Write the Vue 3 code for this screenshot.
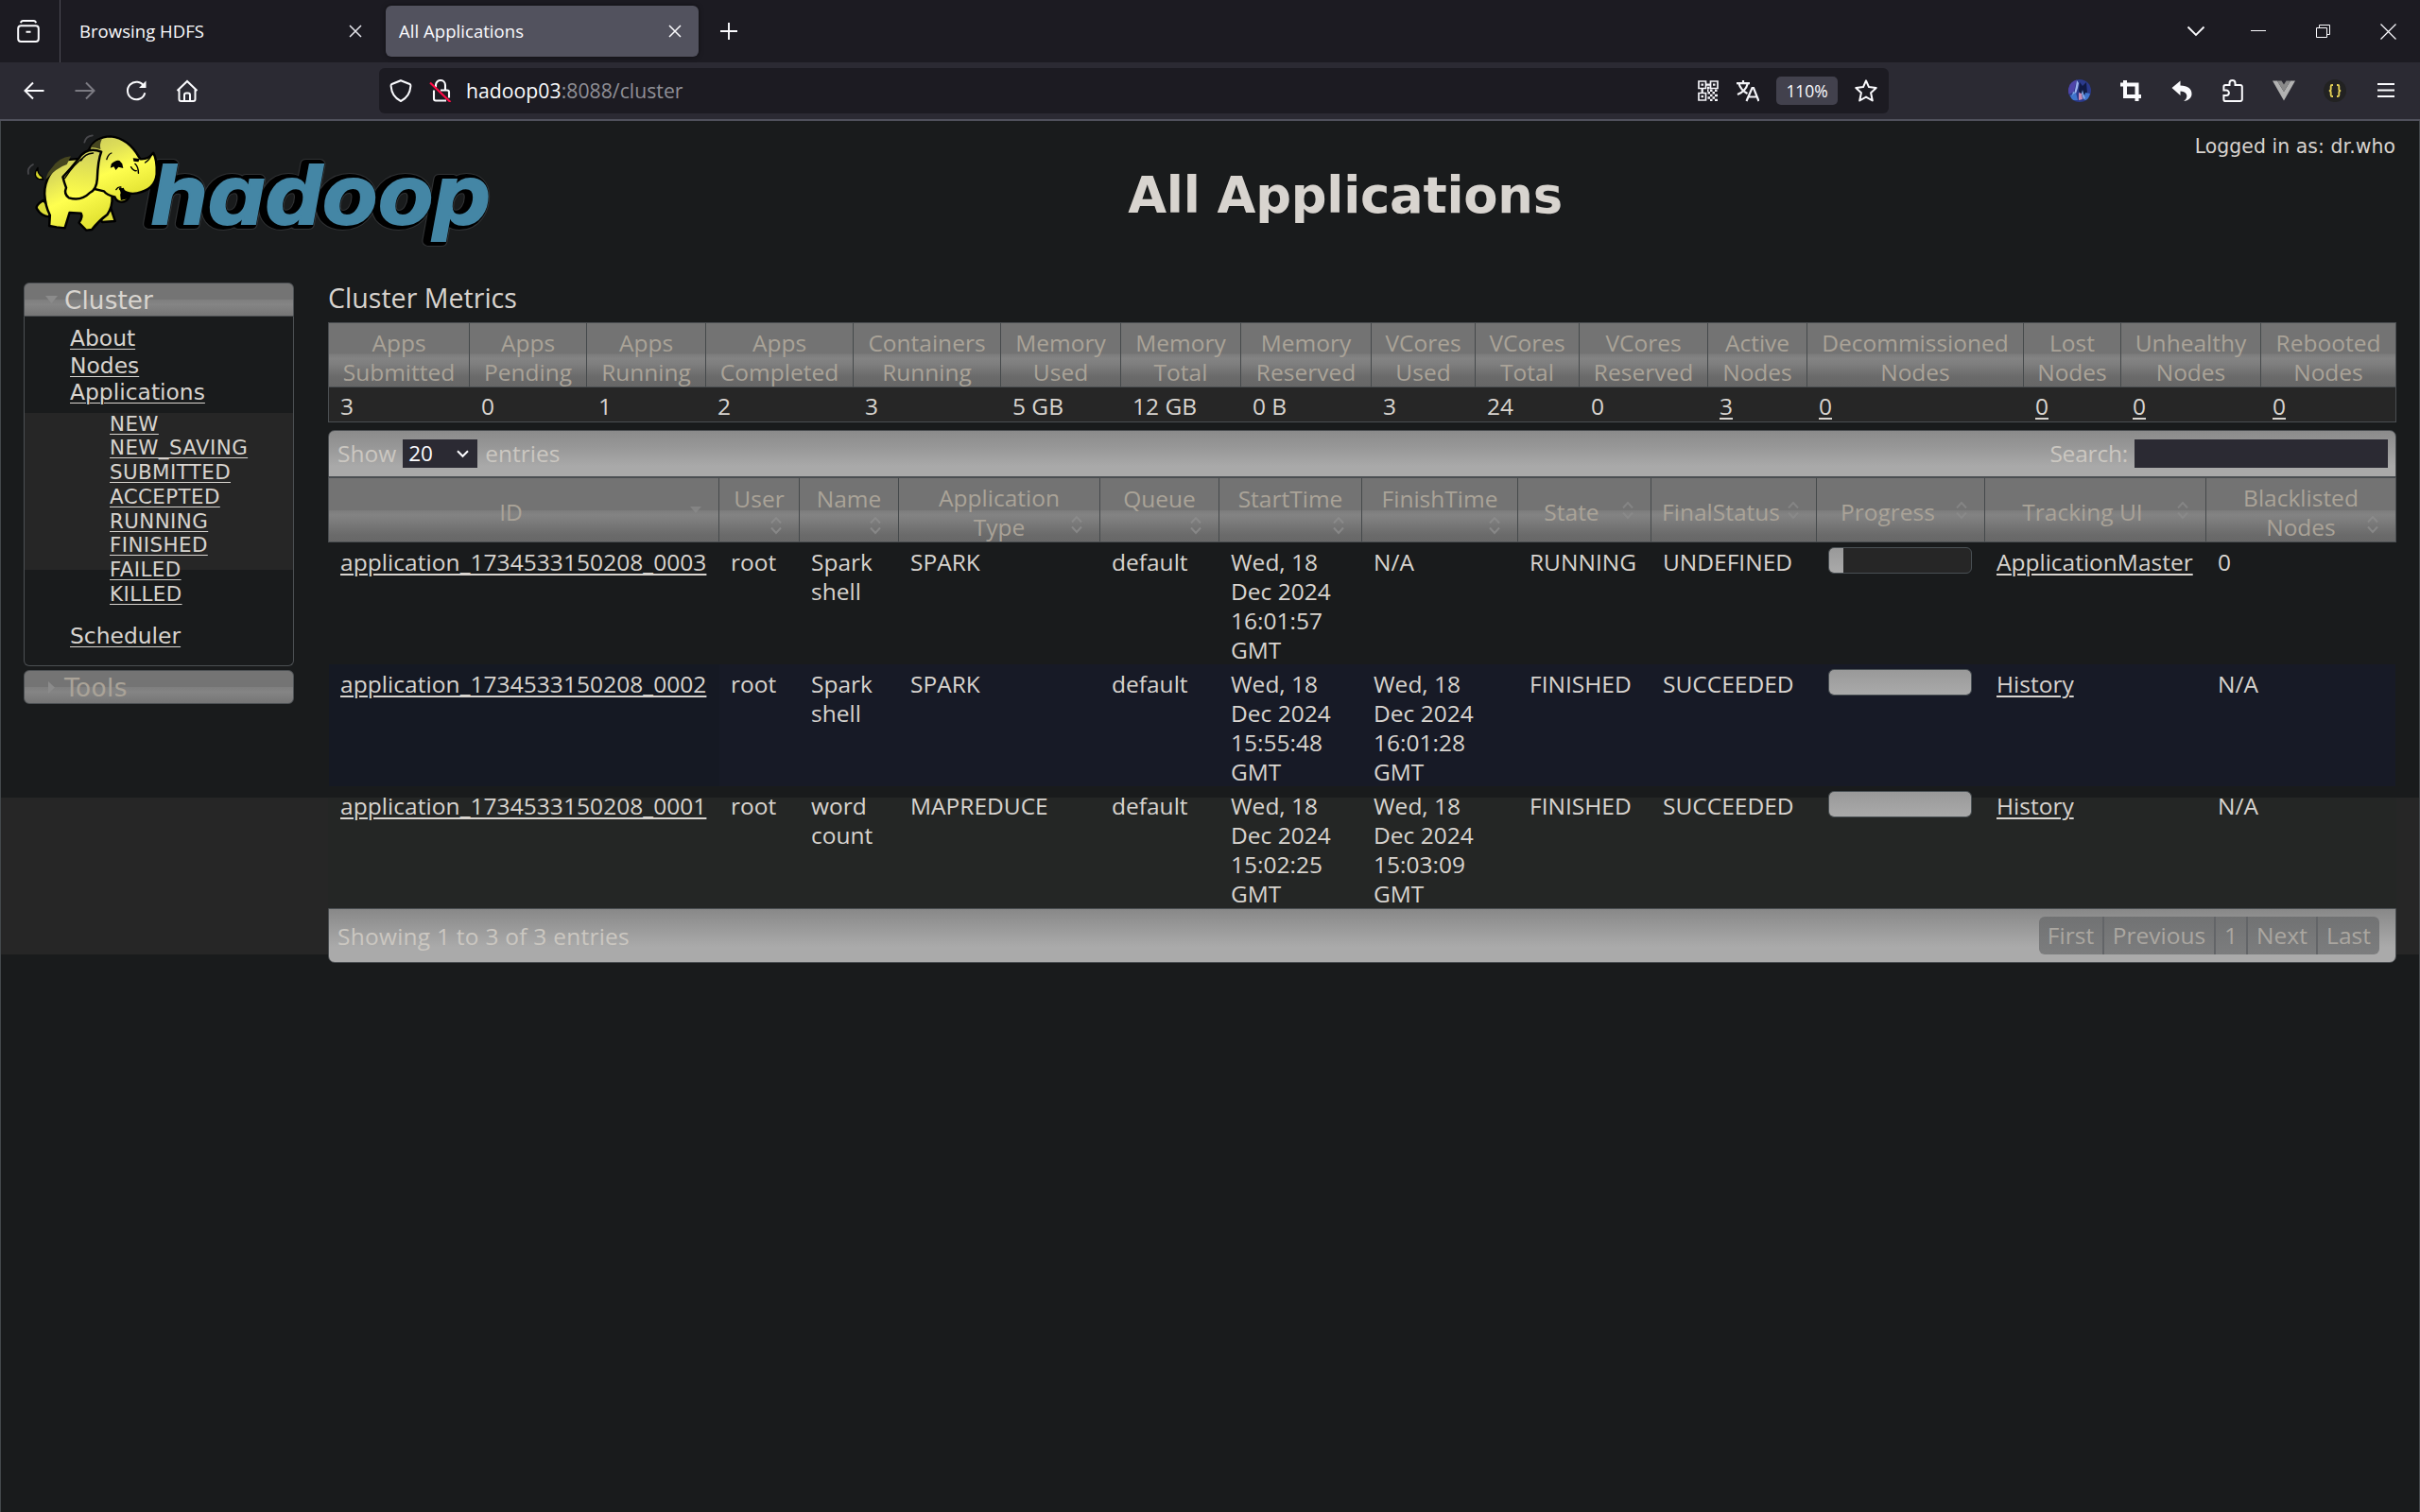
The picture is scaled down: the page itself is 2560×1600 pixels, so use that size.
<script setup>
const metrics = [
  ['Apps', 'Submitted', '3'],
  ['Apps', 'Pending', '0'],
  ['Apps', 'Running', '1'],
  ['Apps', 'Completed', '2'],
  ['Containers', 'Running', '3'],
  ['Memory', 'Used', '5 GB'],
  ['Memory', 'Total', '12 GB'],
  ['Memory', 'Reserved', '0 B'],
  ['VCores', 'Used', '3'],
  ['VCores', 'Total', '24'],
  ['VCores', 'Reserved', '0'],
  ['Active', 'Nodes', '3', true],
  ['Decommissioned', 'Nodes', '0', true],
  ['Lost', 'Nodes', '0', true],
  ['Unhealthy', 'Nodes', '0', true],
  ['Rebooted', 'Nodes', '0', true],
]

const columns = [
  { lines: ['ID'], kind: 'inline', sorted: true },
  { lines: ['User'], kind: 'wrapped' },
  { lines: ['Name'], kind: 'wrapped' },
  { lines: ['Application', 'Type'], kind: 'double' },
  { lines: ['Queue'], kind: 'wrapped' },
  { lines: ['StartTime'], kind: 'wrapped' },
  { lines: ['FinishTime'], kind: 'wrapped' },
  { lines: ['State'], kind: 'inline' },
  { lines: ['FinalStatus'], kind: 'inline' },
  { lines: ['Progress'], kind: 'inline' },
  { lines: ['Tracking UI'], kind: 'inline' },
  { lines: ['Blacklisted', 'Nodes'], kind: 'double' },
]

const rows = [
  {
    id: 'application_1734533150208_0003', user: 'root', name: ['Spark', 'shell'], type: 'SPARK', queue: 'default',
    start: ['Wed, 18', 'Dec 2024', '16:01:57', 'GMT'], finish: ['N/A'],
    state: 'RUNNING', final: 'UNDEFINED', progress: 10, ui: 'ApplicationMaster', black: '0',
  },
  {
    id: 'application_1734533150208_0002', user: 'root', name: ['Spark', 'shell'], type: 'SPARK', queue: 'default',
    start: ['Wed, 18', 'Dec 2024', '15:55:48', 'GMT'], finish: ['Wed, 18', 'Dec 2024', '16:01:28', 'GMT'],
    state: 'FINISHED', final: 'SUCCEEDED', progress: 100, ui: 'History', black: 'N/A',
  },
  {
    id: 'application_1734533150208_0001', user: 'root', name: ['word', 'count'], type: 'MAPREDUCE', queue: 'default',
    start: ['Wed, 18', 'Dec 2024', '15:02:25', 'GMT'], finish: ['Wed, 18', 'Dec 2024', '15:03:09', 'GMT'],
    state: 'FINISHED', final: 'SUCCEEDED', progress: 100, ui: 'History', black: 'N/A',
  },
]

const states = ['NEW', 'NEW_SAVING', 'SUBMITTED', 'ACCEPTED', 'RUNNING', 'FINISHED', 'FAILED', 'KILLED']
</script>

<template>
  <div class="window">
    <div class="tabs">
      <div class="view">
        <svg width="24" height="24" viewBox="0 0 24 24" fill="none" stroke="#fbfbfe" stroke-width="2">
          <rect x="1.2" y="6.2" width="21.6" height="16.8" rx="3" />
          <path d="M4 3.2C4.3 1.6 5 1 6.500 1h11C19 1 19.700 1.600 20 3.200M9.500 12.800h5" />
        </svg>
      </div>
      <div class="tab first">
        <span>Browsing HDFS</span>
        <svg width="14" height="14" viewBox="0 0 14 14" stroke="#e8e8ee" stroke-width="1.5"><path d="M1 1l12 12M13 1L1 13" /></svg>
      </div>
      <div class="tab active">
        <span>All Applications</span>
        <svg width="14" height="14" viewBox="0 0 14 14" stroke="#fbfbfe" stroke-width="1.5"><path d="M1 1l12 12M13 1L1 13" /></svg>
      </div>
      <svg class="plus" width="20" height="20" viewBox="0 0 20 20" stroke="#fbfbfe" stroke-width="1.9"><path d="M10 1v18M1 10h18" /></svg>
      <div class="controls">
        <svg width="20" height="20" viewBox="0 0 20 20" fill="none" stroke="#fbfbfe" stroke-width="1.8"><path d="M1.500 5.500L10 14l8.500-8.500" /></svg>
        <svg width="16" height="16" viewBox="0 0 16 16" stroke="#fbfbfe" stroke-width="1"><path d="M0 7.500h16" /></svg>
        <svg width="16" height="16" viewBox="0 0 16 16" fill="none" stroke="#fbfbfe" stroke-width="1"><path d="M.5 4.500h11v10H.500zM3.500 4.500v-3h11v10h-3" /></svg>
        <svg width="17" height="17" viewBox="0 0 17 17" stroke="#fbfbfe" stroke-width="1.2"><path d="M.5.500l16 16M16.500.500l-16 16" /></svg>
      </div>
    </div>

    <div class="toolbar">
      <div class="nav">
        <svg viewBox="0 0 24 24" fill="none" stroke="#fbfbfe" stroke-width="2"><path d="M22.500 12H3M11 3.500L2.500 12l8.500 8.500" /></svg>
        <svg viewBox="0 0 24 24" fill="none" stroke="#7b7a82" stroke-width="2"><path d="M1.500 12H21M13 3.500L21.500 12 13 20.500" /></svg>
        <svg viewBox="0 0 24 24" fill="none" stroke="#fbfbfe" stroke-width="2"><path d="M20.300 7.300A9.300 9.300 0 1 0 21.300 14.200" /><path d="M22.500 1.500v7.500h-7.500z" fill="#fbfbfe" stroke="none" /></svg>
        <svg viewBox="0 0 24 24" fill="none" stroke="#fbfbfe" stroke-width="2"><path d="M1.500 12L12 2l10.500 10M3.500 10.500V21a2 2 0 0 0 2 2h13a2 2 0 0 0 2-2V10.500M9 23v-6.500a2 2 0 0 1 2-2h2a2 2 0 0 1 2 2V23" /></svg>
      </div>
      <div class="urlbar">
        <svg class="shield" viewBox="0 0 24 24" fill="none" stroke="#fbfbfe" stroke-width="2"><path d="M12 1.200L21.500 5c1 .4 1 1 .9 2.200C21.900 13.500 18.500 20 12 23 5.500 20 2.100 13.500 1.600 7.200 1.500 6 1.500 5.400 2.500 5z" /></svg>
        <svg class="lock" viewBox="0 0 24 24" fill="none" stroke="#fbfbfe" stroke-width="2.100"><path d="M7 8.500V6a5 5 0 0 1 10 0v5M5 11.500v9a2 2 0 0 0 2 2h11M12 11.500h7a2 2 0 0 1 2 2v6" /><path d="M1 3.500L22.500 24" stroke="#ff0a45" stroke-width="2.200" /></svg>
        <span class="url"><b>hadoop03</b>:8088/cluster</span>
        <svg class="qr" viewBox="0 0 22 22" fill="none" stroke="#f4f4f8" stroke-width="1.700">
          <path d="M1 1h7.500v7.500H1zM13.500 1H21v7.500h-7.500zM1 13.500h7.500V21H1z" />
          <path d="M3.500 4.700h2.500M16 4.700h2.500M3.500 17.200h2.500M8.500 4.700h5M4.700 8.500v5" stroke-width="2.300" />
          <path d="M10 8h2.500M13 10.700h2.500M18 10.700h2.500M10.500 13.300H13M15.500 13.300H18M13 16h2.500M18 16h3M10.500 18.500H13M15.500 18.500H18M13 21h2.500M18 21h3M10 10.700h1.500" stroke-width="2.500" />
        </svg>
        <svg class="lang" viewBox="0 0 24 24" fill="none" stroke="#f4f4f8" stroke-width="2.200"><path d="M0 4.200h14M7 1v3.200M2.500 4.500C3.800 9 7 12.700 11.500 15M11.800 4.500C10.500 9.500 6.500 13.800 1 16M10.500 23l6-14h1.500l5.500 14M12.500 18.500h9" /></svg>
        <span class="pill">110%</span>
        <svg class="star" viewBox="0 0 24 24" fill="none" stroke="#fbfbfe" stroke-width="2" stroke-linejoin="round"><path d="M12 1.300l3 6.800 7.700.8-5.600 5.300 1.700 8.300L12 18.600 5.200 22.500l1.700-8.300L1.300 8.900 9 8.100z" /></svg>
      </div>
      <div class="ext">
        <svg viewBox="0 0 24 24"><defs><clipPath id="avatar"><circle cx="12" cy="12" r="12" /></clipPath></defs><g clip-path="url(#avatar)"><path fill="#2b3a8c" d="M0 0h24v24H0z" /><path fill="#4f44a8" d="M0 0h9l-3 13-6 3z" /><path fill="#101a45" d="M12 3l3 4 4-4 1 12-6 2-3-5z" /><path fill="#9fb4ee" d="M9 1l2 3-1 5-2 6-2 1 2-9z" /><path fill="#3f74cc" d="M2 17l6-3 2 8H4zM18 14l5 1-3 8-4-2z" /><path fill="#7fa8e8" d="M15 11l1 4 2 5-2 1-2-6zM5 13l2 1-3 3z" /><path fill="#c78bb4" d="M11 14l3 1 1 6-4 1z" /></g></svg>
        <svg viewBox="0 0 24 24" fill="none" stroke="#fbfbfe" stroke-width="4"><path d="M1 5.500h17.500V23M6 1v17h17" /></svg>
        <svg viewBox="0 0 24 24" fill="#fbfbfe"><path d="M1.500 9L10.500 1.500V6.500C18.500 6.500 22.500 10 22.500 15.500c0 4-3.500 7-8.500 7.500 4.500-2.500 5.500-10-3.500-10.500V17z" /></svg>
        <svg viewBox="0 0 24 24" fill="none" stroke="#fbfbfe" stroke-width="2"><path d="M8.500 6V4a3 3 0 0 1 6 0v2H20a1.800 1.800 0 0 1 1.800 1.800V21.200A1.800 1.800 0 0 1 20 23H4.200a1.800 1.800 0 0 1-1.800-1.800V17h2.800a2.700 2.700 0 0 0 0-5.400H2.400V7.800A1.800 1.800 0 0 1 4.200 6z" /></svg>
        <svg viewBox="0 0 24 24"><path fill="#b2b2b2" d="M0 1.500h5L12 13l7-11.500h5L12 22.500z" /><path fill="#8a8a8a" d="M5 1.500h4.500l2.500 4 2.500-4H19L12 13z" /></svg>
        <svg viewBox="0 0 24 24"><circle cx="12" cy="12" r="12" fill="#222222" /><path fill="none" stroke="#e2cf55" stroke-width="1.900" d="M10 6H8.800Q7.700 6 7.700 7.500v2.700Q7.700 12 5.800 12q1.900 0 1.900 1.800v2.700q0 1.500 1.100 1.500H10M14 6h1.200q1.100 0 1.100 1.500v2.700q0 1.800 1.900 1.800-1.900 0-1.900 1.800v2.700q0 1.500-1.100 1.500H14" /></svg>
        <svg viewBox="0 0 24 24" stroke="#fbfbfe" stroke-width="1.900"><path d="M3 5h18M3 11.500h18M3 18h18" /></svg>
      </div>
    </div>

    <main class="page">
      <header class="head">
        <svg class="logo" width="560" height="152" viewBox="0 24 1568 456" preserveAspectRatio="none">
          <defs>
            <linearGradient id="skin" x1="0" y1="0" x2=".45" y2="1">
              <stop offset="0" stop-color="#c9c95c" /><stop offset=".3" stop-color="#dede58" /><stop offset=".6" stop-color="#ffff4f" /><stop offset="1" stop-color="#e4e434" />
            </linearGradient>
            <linearGradient id="ear" x1=".6" y1="0" x2=".5" y2="1">
              <stop offset="0" stop-color="#d0d060" /><stop offset=".55" stop-color="#eaea50" /><stop offset="1" stop-color="#ffff4a" />
            </linearGradient>
          </defs>
          <g transform="scale(2.8 3)" font-family="Inter, 'Liberation Sans', sans-serif" font-weight="700" font-style="italic" font-size="87">
            <text x="160" y="116.500" textLength="359" lengthAdjust="spacingAndGlyphs" fill="#000" stroke="#303234" stroke-width="12" stroke-linejoin="round" transform="translate(-4 0)">hadoop</text>
            <text x="160" y="116.500" textLength="359" lengthAdjust="spacingAndGlyphs" fill="#000" stroke="#000" stroke-width="10" stroke-linejoin="round" transform="translate(-4 0)">hadoop</text>
            <text x="160" y="116.500" textLength="359" lengthAdjust="spacingAndGlyphs" fill="#4486a5" stroke="#4486a5" stroke-width="2">hadoop</text>
          </g>
          <g stroke="#000" stroke-width="7" stroke-linejoin="round" stroke-linecap="round">
            <path fill="#d9d92c" d="M112 172Q96 198 114 208l14 2-4-10q-14-8-12-28z" stroke-width="4" />
            <path fill="#dcdc38" d="M128 276q-26 18-18 28 12 22 36 24l6-24zM325 290l16 52-38 3-14-20z" />
            <path fill="url(#skin)" d="M192 148Q132 190 132 255q2 40 16 68l-2 34 22 4 24 3 14-49 34 2q6 12-6 30l22 24 16-2q20-28 46-48 16-24 14-60l-10-70-60-50z" />
            <path fill="url(#skin)" d="M262 118Q280 74 328 73q52 6 84 66l4 6q24 2 38-20 12 22 10 68-4 48-58 60-30 6-50-14l28 22q-8 22-26 20-14-2-18-16-24-6-32-18l-40-10-30-70z" />
            <path fill="#46461f" stroke="none" d="M150 178q24-40 60-42l-12 26q-30 10-62 48 2-18 14-32zM268 108q14-22 34-26-8 16-4 32-16-6-30-6z" />
            <path fill="url(#ear)" d="M300 122q-42-18-66 20-22 30-48 60 4 18 10 34-8 20 8 32 36 12 62-16 20-10 22-44 2-60 12-86z" />
            <path fill="none" d="M240 150q10-22 36-24M192 206q28-46 60-70" stroke-width="4" />
            <path fill="#000" stroke="none" d="M330 160q14-14 24-10l8 10 3 14-14-4-8 10-6-11-10 4zM394 142l20 2-4 10-14-2zM352 240l14-4q4 14 18 16l-2 18-24 6-2-18q4-8-4-18z" />
            <path fill="none" d="M316 146q4-16 14-20M388 170q8 14 16 12M400 160q10 10 10 30M430 156q14-10 18-24M344 242q6-10 14-8" stroke-width="4" />
            <path fill="none" stroke="#48484c" stroke-width="5" d="M250 92q4-20 24-22M84 192q-4-20 14-30" />
          </g>
        </svg>
        <h1>All Applications</h1>
        <div class="login">Logged in as: dr.who</div>
      </header>

      <div class="body">
        <aside class="side">
          <div class="bar open">
            <svg width="13" height="8" viewBox="0 0 13 8" fill="#8b8b8b"><path d="M0 0h13L6.500 8z" /></svg><span>Cluster</span>
          </div>
          <div class="menu">
            <ul>
              <li><a>About</a></li>
              <li><a>Nodes</a></li>
              <li><a>Applications</a>
                <ul class="sub">
                  <li v-for="s in states" :key="s"><a>{{ s }}</a></li>
                </ul>
              </li>
              <li><a>Scheduler</a></li>
            </ul>
          </div>
          <div class="bar closed">
            <svg width="13" height="13" viewBox="0 0 13 13" fill="#8b8b8b"><path d="M3 0v13L10 6.500z" /></svg><span>Tools</span>
          </div>
        </aside>

        <section class="content">
          <h2>Cluster Metrics</h2>
          <div class="metrics">
            <div v-for="(m, i) in metrics" :key="'h' + i" class="mh">{{ m[0] }}<br />{{ m[1] }}</div>
            <div v-for="(m, i) in metrics" :key="'v' + i" class="mv"><a v-if="m[3]">{{ m[2] }}</a><template v-else>{{ m[2] }}</template></div>
          </div>

          <div class="apps">
            <div class="tools">
              <span class="show">Show</span>
              <span class="select">20
                <svg width="13" height="9" viewBox="0 0 13 9" fill="none" stroke="#fbfbfe" stroke-width="2"><path d="M1 1.200l5.500 5.600L12 1.200" /></svg>
              </span>
              <span class="entries">entries</span>
              <span class="search">Search:</span>
              <span class="field"></span>
            </div>
            <div class="grid ghead">
              <div v-for="c in columns" :key="c.lines[0]" class="th" :class="c.kind">
                <span v-for="l in c.lines" :key="l">{{ l }}</span>
                <svg v-if="c.sorted" class="sort" width="14" height="24" viewBox="0 0 14 24"><path d="M1 8h12L7 15z" fill="#8e8e8e" /></svg>
                <svg v-else class="sort" width="14" height="24" viewBox="0 0 14 24" fill="none" stroke="#8e8e8e" stroke-width="2"><path d="M2 9.500l5-5.500 5 5.500M2 14.500L7 20l5-5.500" /></svg>
              </div>
            </div>
            <div v-for="(r, i) in rows" :key="r.id" class="grid row" :class="'r' + i">
              <div class="id"><a>{{ r.id }}</a></div>
              <div>{{ r.user }}</div>
              <div><p v-for="l in r.name" :key="l">{{ l }}</p></div>
              <div>{{ r.type }}</div>
              <div>{{ r.queue }}</div>
              <div><p v-for="l in r.start" :key="l">{{ l }}</p></div>
              <div><p v-for="l in r.finish" :key="l">{{ l }}</p></div>
              <div>{{ r.state }}</div>
              <div>{{ r.final }}</div>
              <div><div class="progress"><i :style="{ width: r.progress + '%' }"></i></div></div>
              <div><a>{{ r.ui }}</a></div>
              <div>{{ r.black }}</div>
            </div>
            <div class="foot">
              <span class="info">Showing 1 to 3 of 3 entries</span>
              <div class="pager"><span>First</span><span>Previous</span><span>1</span><span>Next</span><span>Last</span></div>
            </div>
          </div>
        </section>
      </div>
    </main>
  </div>
</template>

<style>
body { background: #191b1c; }
</style>

<style scoped>
* { box-sizing: border-box; }
svg { display: block; flex: none; }
.window { width: 2560px; height: 1600px; overflow: hidden; display: flex; flex-direction: column; font-family: "Open Sans", "Noto Sans", sans-serif; color: #d8d4cf; }

.tabs { height: 66px; flex: none; background: #1c1b22; display: flex; align-items: center; color: #fbfbfe; font-size: 18.500px; letter-spacing: .05px; }
.tab span { padding-bottom: 1px; }
.view { width: 64px; height: 66px; border-right: 1px solid #4d4c55; display: flex; align-items: center; padding-left: 18px; }
.tab { height: 54px; display: flex; align-items: center; justify-content: space-between; border-radius: 6px; white-space: nowrap; }
.first { width: 341px; padding: 0 22px 0 20px; }
.active { width: 331px; margin-left: 3px; padding: 0 18px 0 14px; background: #52525e; box-shadow: 0 0 5px rgba(0, 0, 0, .5); }
.plus { margin-left: 22px; }
.controls { margin-left: auto; margin-right: 25px; display: flex; align-items: center; }
.controls svg:nth-child(2) { margin-left: 48px; }
.controls svg:nth-child(3) { margin-left: 53px; }
.controls svg:nth-child(4) { margin-left: 52px; }

.toolbar { height: 62px; flex: none; background: #2b2a33; border-bottom: 2px solid #50515c; display: flex; align-items: center; }
.nav, .ext { display: flex; align-items: center; }
.nav { padding-left: 9px; }
.nav svg, .ext svg { width: 24px; height: 24px; margin: 0 15px; }
.ext { margin-left: auto; padding-right: 9px; }
.urlbar { width: 1597px; height: 48px; margin-left: 176px; background: #1c1b22; border-radius: 6px; display: flex; align-items: center; }
.shield { width: 24px; height: 24px; margin-left: 11px; }
.lock { width: 24px; height: 24px; margin-left: 18px; }
.url { margin-left: 15px; padding-bottom: 1px; font-size: 21.200px; letter-spacing: .03px; color: #8f8f96; }
.url b { font-weight: 400; color: #fbfbfe; }
.qr { width: 22px; height: 22px; margin-left: auto; }
.lang { width: 24px; height: 24px; margin-left: 19px; }
.pill { width: 65px; height: 30px; margin: 0 18px; border-radius: 5px; background: #42414d; color: #fbfbfe; font-size: 17.500px; line-height: 30px; text-align: center; letter-spacing: -.1px; }
.star { width: 24px; height: 24px; margin-right: 12px; }

.page { flex: 1; border: solid #43484b; border-width: 0 1px; background: linear-gradient(#191b1c 716px, #262626 716px, #262626 882px, #191b1c 882px); }
.head { height: 171px; margin-left: -1px; margin-right: -1px; display: grid; grid-template-columns: 560px 1726px 274px; font-family: "DejaVu Sans", Verdana, sans-serif; }
h1 { margin: 49px 0 0; font-size: 52.800px; line-height: 60px; font-weight: 700; text-align: center; letter-spacing: -.25px; }
.login { margin-top: 14px; padding-right: 26px; font-size: 20.400px; letter-spacing: .07px; line-height: 26px; text-align: right; white-space: nowrap; }

.body { display: flex; align-items: flex-start; }
a { text-decoration: underline; }
.side { width: 286px; margin-left: 24px; font-family: "DejaVu Sans", Verdana, sans-serif; }
.bar { height: 36px; border: 1px solid #4c5053; border-radius: 6px; background: linear-gradient(#747474 50%, #7e7e7e 50%, #858585 65%, #757575); display: flex; align-items: center; font-size: 26.300px; letter-spacing: .1px; }
.bar svg { margin-left: 22px; }
.bar span { margin-left: 7px; line-height: 33px; padding-top: 3px; }
.open { border-radius: 6px 6px 0 0; }
.closed { margin-top: 4px; height: 36px; color: #aaa398; }
.closed span { letter-spacing: .4px; padding-top: 2px; }
.menu { height: 370px; border: 1px solid #4c5053; border-top: 0; border-radius: 0 0 6px 6px; background: linear-gradient(transparent 102px, #262626 102px, #262626 268px, transparent 268px); }
ul { list-style: none; margin: 0; padding: 0; }
.menu > ul { padding: 9px 0 0 48px; font-size: 23.400px; line-height: 28.500px; }
.menu a { text-decoration-thickness: 1px; text-underline-offset: 3px; }
.sub { padding: 6px 0 17px 42px; font-size: 21.400px; line-height: 25.800px; letter-spacing: .4px; }

.content { width: 2188px; margin-left: 36px; font-size: 24.500px; line-height: 31px; }
h2 { margin: 0; height: 42px; font-size: 28.600px; line-height: 32px; font-weight: 400; white-space: nowrap; }
.content a { text-decoration-thickness: 2px; text-underline-offset: 3px; }
.metrics { border: 1px solid #4a4e51; display: grid; grid-template-columns: 149px 124px 126px 156px 156px 127px 127px 138px 110px 110px 136px 105px 229px 103px 148px 142px; }
.mh { height: 68px; padding-top: 5px; text-align: center; color: #aaa398; border-right: 1px solid #45494b; border-bottom: 1px solid #4a4e51; background: linear-gradient(#737373 48%, #7c7c7c 49%, #838383 56%, #7e7e7e 65%, #6a6a6a 85%, #676767); }
.mh:nth-child(16) { border-right: 0; }
.mv { height: 36px; padding: 4px 0 0 12px; background: #262626; }

.apps { margin-top: 8px; }
.tools { height: 50px; border: 1px solid #4a4e51; border-radius: 7px 7px 0 0; background: linear-gradient(#8b8b8b, #979797 35%, #a9a9a9 78%, #a9a9a9); display: flex; align-items: center; padding: 0 8px 0 9px; color: #cbc7c1; }
.show, .entries, .search { padding-bottom: 1px; }
.select { width: 79px; height: 30px; margin-left: 7px; padding: 0 9px 0 6px; background: #2b2a33; color: #fbfbfe; font-size: 22.500px; line-height: 30px; display: flex; align-items: center; justify-content: space-between; }
.entries { margin-left: 8px; }
.search { margin-left: auto; letter-spacing: -.2px; }
.field { width: 268px; height: 30px; margin-left: 7px; background: #2b2a33; }
.grid { display: grid; grid-template-columns: 413px 85px 105px 213px 126px 151px 165px 141px 175px 178px 234px 200px; border: solid #4a4e51; border-width: 0 1px; }
.ghead { border-width: 1px; height: 69px; background: linear-gradient(#737373 50%, #7c7c7c 51%, #838383 58%, #7c7c7c 68%, #6a6a6a 90%, #686868); color: #aaa398; }
.th { position: relative; height: 67px; border-right: 1px solid #45494b; display: flex; flex-direction: column; align-items: center; }
.th:last-child { border-right: 0; }
.double { padding-top: 5px; }
.wrapped { padding-top: 6px; }
.inline { padding: 20px 27px 0 0; }
.sort { position: absolute; right: 17px; top: 38px; opacity: .8; }
.double .sort { top: 37px; }
.inline .sort { top: 22px; opacity: .65; }
.row { height: 129px; border-color: transparent; }
.row > div { padding: 5px 0 0 12px; white-space: nowrap; }
.row > .id { letter-spacing: .06px; }
.row p { margin: 0; }
.r1 > div { background: #171a26; }
.r1 > .id { background: #151923; }
.r2 { background: linear-gradient(#191b1c 12px, #242625 12px); }
.progress { width: 152px; height: 28px; border: 1px solid #495054; border-radius: 6px; background: #262626; overflow: hidden; }
.progress i { display: block; height: 100%; background: linear-gradient(#999, #aaa); }
.foot { height: 58px; border: 1px solid #4a4e51; border-radius: 0 0 7px 7px; background: linear-gradient(#888, #999 35%, #aaa 72%, #aaa); display: flex; align-items: center; justify-content: space-between; padding: 0 17px 0 9px; color: #cbc7c1; }
.info { letter-spacing: .24px; }
.pager { display: flex; height: 40px; border-radius: 6px; overflow: hidden; background: linear-gradient(#717273, #7c7d7e); line-height: 39px; color: #aba7a1; }
.pager span { border-right: 2px solid #636568; text-align: center; width: 69px; }
.pager span:nth-child(2) { width: 118px; }
.pager span:nth-child(3) { width: 34px; }
.pager span:nth-child(4) { width: 74px; }
.pager span:nth-child(5) { width: 65px; border-right: 0; }
</style>
